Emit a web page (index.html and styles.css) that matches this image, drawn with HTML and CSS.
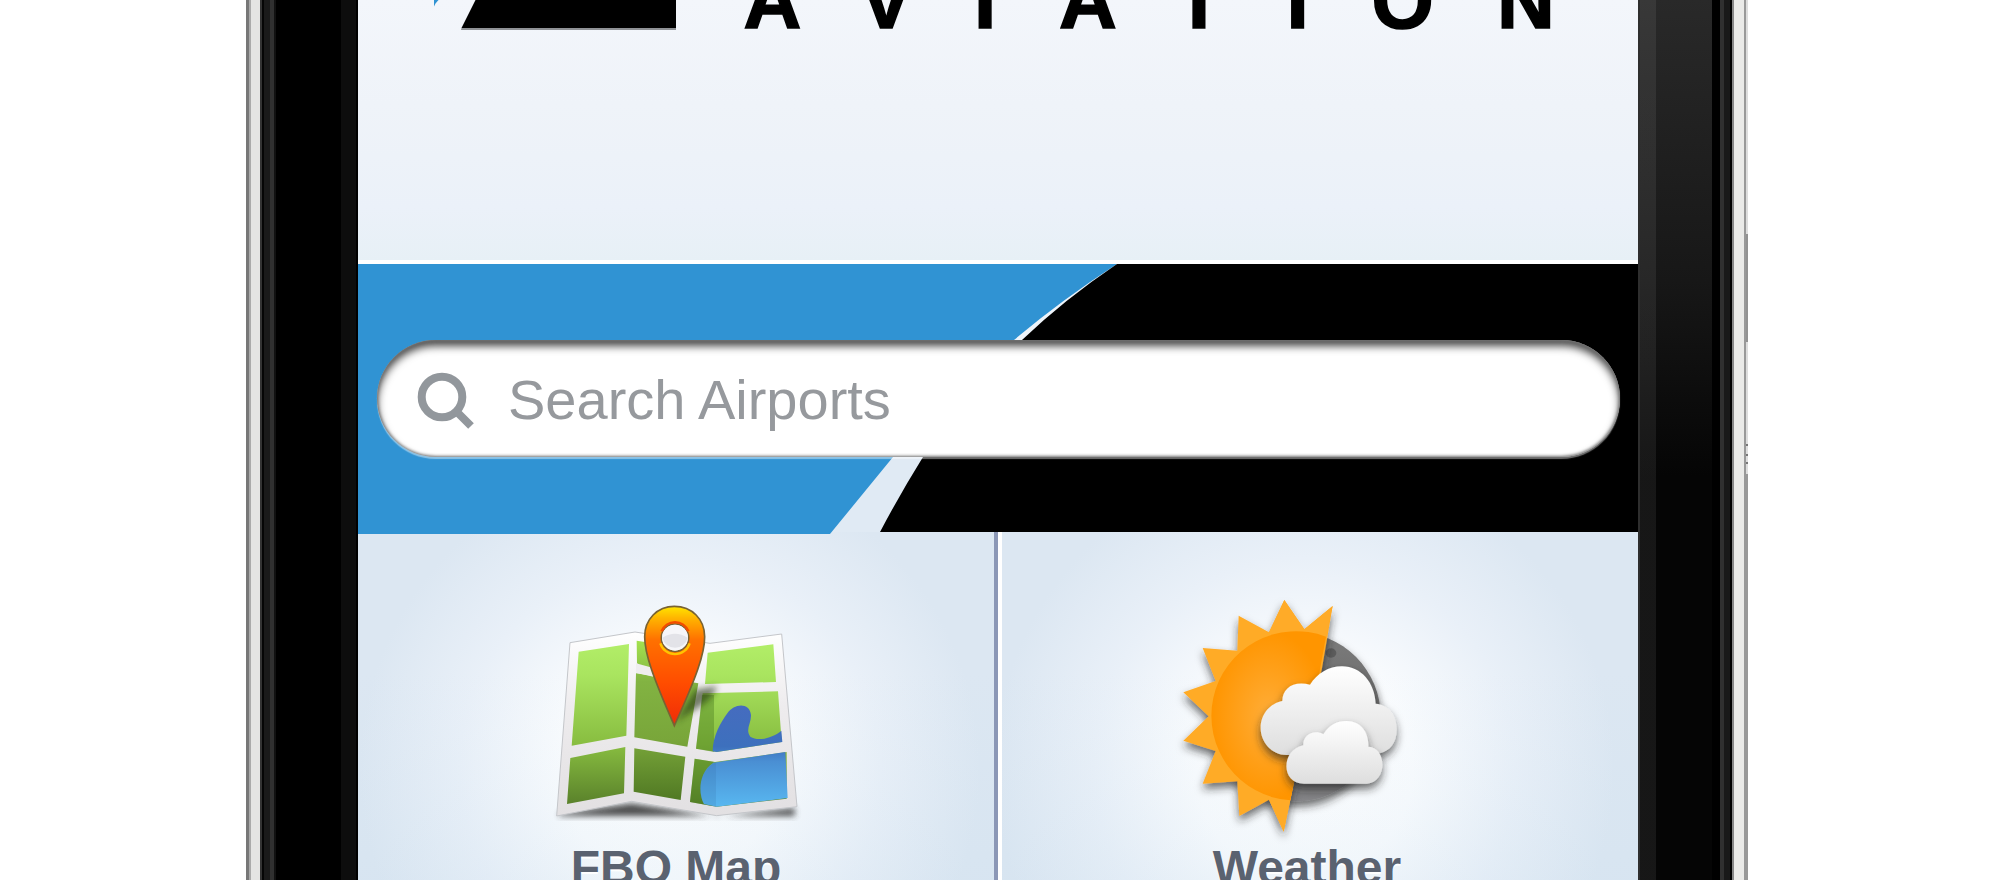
FILE: index.html
```
<!DOCTYPE html>
<html lang="en">
<head>
<meta charset="utf-8">
<title>Aviation</title>
<link rel="stylesheet" href="styles.css">
</head>
<body>
<main class="phone">
  <div class="bezel bezel-left"></div>
  <section class="screen">
    <header class="brand">
      <svg class="logo" width="1280" height="40" viewBox="358 0 1280 40">
        <path d="M434 0h4.500l-3 3.500-1.500 3z" fill="#3093d3"/>
        <path d="M475.500 0H676v28H461.500z" fill="#000"/>
        <path d="M461.500 28H676v2H461z" fill="#8f9296"/>
        <text class="wordmark" y="28" x="743.500 859.500 974 1059 1174.500 1286.500 1371.500 1497">AVIATION</text>
      </svg>
    </header>
    <div class="search-band">
      <svg class="swoosh" width="1280" height="271" viewBox="358 264 1280 271">
        <path d="M1112 266L1060 300L1010 342H1026L1075 300z" fill="#eef4fa"/>
        <path d="M358 264H1117Q1060 301 1014 340Q950 393 893 457L830 534H358z" fill="#3093d3"/>
        <path d="M1117 264H1638V532H880Q900 494 923 457Q966 393 1022 340Q1065 299 1117 264z" fill="#000"/>
      </svg>
      <label class="search">
        <svg class="glass" width="58" height="60" viewBox="0 0 58 60"><circle cx="25" cy="25" r="20.300"/><path d="M39 39L54 54"/></svg>
        <span class="placeholder">Search Airports</span>
      </label>
    </div>
    <nav class="tiles">
      <a class="tile tile-map">
        <svg class="icon icon-map" width="300" height="300" viewBox="0 0 900 900">
          <defs>
            <linearGradient id="paper" x2="0" y2="1"><stop stop-color="#fff"/><stop offset=".4" stop-color="#eeecee"/><stop offset="1" stop-color="#e2e0e2"/></linearGradient>
            <linearGradient id="land" gradientUnits="userSpaceOnUse" x1="0" y1="190" x2="0" y2="680"><stop stop-color="#b2ee68"/><stop offset=".2" stop-color="#a9e45f"/><stop offset=".62" stop-color="#88bd40"/><stop offset="1" stop-color="#587f2a"/></linearGradient>
            <linearGradient id="land2" gradientUnits="userSpaceOnUse" x1="0" y1="180" x2="0" y2="680"><stop stop-color="#a5e34f"/><stop offset=".25" stop-color="#82b342"/><stop offset=".6" stop-color="#79a63a"/><stop offset="1" stop-color="#4c7421"/></linearGradient>
            <linearGradient id="water" gradientUnits="userSpaceOnUse" x1="0" y1="380" x2="0" y2="680"><stop stop-color="#456cbf"/><stop offset=".4" stop-color="#3d70bd"/><stop offset=".55" stop-color="#4a8fd3"/><stop offset="1" stop-color="#58b7f0"/></linearGradient>
            <linearGradient id="pin" x2="0" y2="1"><stop stop-color="#ffe600"/><stop offset=".1" stop-color="#ffb400"/><stop offset=".28" stop-color="#ff7100"/><stop offset=".65" stop-color="#ff4c00"/><stop offset="1" stop-color="#ef2b08"/></linearGradient>
            <filter id="soft" x="-30%" y="-30%" width="160%" height="160%"><feGaussianBlur stdDeviation="9"/></filter>
          </defs>
          <path d="M118 700L335 670L590 710L824 684V708H118z" fill="#333" opacity=".85" filter="url(#soft)"/>
          <path d="M150 188L345 156L570 190L785 162L831 680L590 707L335 664L110 708z" fill="url(#paper)" stroke="#c4c6ca" stroke-width="3"/>
          <path d="M176 215L327 192L319 467L155 497zM151 534L316 501L312 640L141 672z" fill="url(#land)"/>
          <path d="M350 182L400 190V290L351 250zM348 280L535 310L502 500L343 472zM343 505L496 530L482 660L341 635z" fill="url(#land2)"/>
          <path d="M348 250L400 264V290L348 278z" fill="#efedef"/>
          <path d="M563 218L760 193L768 306L555 312zM548 340L774 334L785 486L590 516L528 506zM524 536L585 546L800 516V656L590 680L510 666z" fill="url(#land)"/>
          <path d="M546 345H582V516L528 506zM524 536L580 545V679L510 666z" fill="#4c7e22" opacity=".42"/>
          <path d="M578 514C578 470 603 425 622 400C642 370 689 366 693 405C694 430 675 449 691 470C714 485 756 475 784 452L787 486L590 516zM580 548L796 516L803 654L590 680L552 672C535 642 534 578 580 548z" fill="url(#water)"/>
          <path d="M552 580Q568 554 588 547V680L552 672C538 650 535 606 552 580z" fill="#306c9e" opacity=".18"/>
          <path d="M465 430L525 330L590 318C580 370 510 390 465 430z" fill="#203010" opacity=".6" filter="url(#soft)"/>
          <path d="M463 79C412 79 374 118 374 170C374 220 398 290 463 437C530 290 554 220 554 170C554 118 516 79 463 79zM465 132a41 41 0 1 1 0 82a41 41 0 1 1 0-82z" fill="url(#pin)" fill-rule="evenodd" stroke="#796233" stroke-width="5"/>
          <circle cx="465" cy="173" r="39" fill="#f6f6f9"/>
          <path d="M427 173Q465 150 503 173A39 39 0 0 1 427 173z" fill="#dcdce1" opacity=".7"/>
          <path d="M425 154A43 43 0 0 1 505 154" fill="none" stroke="#f34c00" stroke-width="8"/>
          <path d="M421 190A46 46 0 0 0 509 190" fill="none" stroke="#ffc400" stroke-width="7"/>
        </svg>
        <span class="label">FBO Map</span>
      </a>
      <a class="tile tile-weather">
        <svg class="icon icon-weather" width="300" height="300" viewBox="0 0 900 900">
          <defs>
            <radialGradient id="sun"><stop stop-color="#ffad38"/><stop offset="1" stop-color="#ff9500"/></radialGradient>
            <linearGradient id="cloud" x2="0" y2="1"><stop stop-color="#fff"/><stop offset="1" stop-color="#dedede"/></linearGradient>
            <linearGradient id="moon" x2="0" y2="1"><stop stop-color="#7c7c7c"/><stop offset=".7" stop-color="#606060"/><stop offset="1" stop-color="#858588"/></linearGradient>
            <filter id="drop" x="-20%" y="-20%" width="150%" height="150%"><feDropShadow dx="0" dy="16" stdDeviation="12" flood-color="#222" flood-opacity=".65"/></filter>
          </defs>
          <circle cx="438" cy="410" r="254" fill="url(#moon)" filter="url(#drop)"/>
          <ellipse cx="543" cy="219" rx="16" ry="14" fill="#5c5c5c"/>
          <path d="M548 78L463 148L403 60L357 157L266 107L262 212L158 204L197 303L100 337L176 409L100 482L197 513L158 611L262 604L268 708L357 659L401 755L433 600L515 270z" fill="#ffab28" filter="url(#drop)"/>
          <path d="M548 78L528 168Q515 245 500 330L433 604L401 755L357 659L300 500L357 157L403 60L463 148z" fill="#ffab28"/>
          <path d="M528 170A254 254 0 1 0 421 661L434 598L508 280z" fill="url(#sun)"/>
          <path d="M410 525C365 525 332 486 332 444C332 400 362 370 397 363C397 325 430 301 480 314C503 280 535 259 576 259C634 259 675 310 677 371C715 374 740 405 740 448C740 490 720 512 690 520z" fill="url(#cloud)" filter="url(#drop)"/>
          <path d="M462 611C390 610 394 509 460 496C458 467 490 446 520 463C539 435 558 423 590 423C634 423 657 460 655 500C712 502 712 608 650 611z" fill="url(#cloud)" filter="url(#drop)"/>
        </svg>
        <span class="label">Weather</span>
      </a>
    </nav>
  </section>
  <div class="bezel bezel-right"></div>
  <div class="buttons"></div>
</main>
</body>
</html>
```
FILE: styles.css
```
body { margin: 0; background: #fff; font-family: "Liberation Sans", Arial, sans-serif; }
.phone { display: flex; height: 880px; width: 1504px; margin-left: 246px; overflow: hidden; }
.bezel { height: 880px; flex: none; }
.bezel-left {
  width: 112px;
  background: linear-gradient(90deg, #777 0 3px, #aaa 3px 5px, #e4e4e3 5px 14px, #333 14px 16px, #050505 16px 18px, #1a1a1a 18px 24px, #303030 24px 28px, #111 28px 30px, #000 30px 95px, #0d0d0d 95px 110px, #000 110px);
}
.bezel-right {
  width: 108px;
  background:
    linear-gradient(90deg, #2e2e2e 0 2px, #0000 2px),
    linear-gradient(90deg, #ffffff12 0 18px, #0000 18px 74px, #000 74px 82px, #303030 82px 86px, #191919 86px 92px, #000 92px 94px, #888 94px 96px, #eaeae8 96px 106px, #999 106px 108px),
    linear-gradient(#292929, #171717 32%, #050505 54%, #050505);
}
.buttons {
  width: 2px; height: 880px;
  background: linear-gradient(#ddd 0 234px, #929292 234px 342px, #ddd 342px 444px, #777 444px 446px, #ddd 446px 454px, #777 454px 456px, #ddd 456px 462px, #777 462px 464px, #ddd 464px 474px, #999 474px);
}
.screen { width: 1280px; height: 880px; flex: none; display: flex; flex-direction: column; overflow: hidden; background: #dfe9f3; }
.brand { height: 260px; flex: none; border-bottom: 4px solid #fff; background: linear-gradient(#f3f6fb, #eff3f9 40%, #ebf1f9 80%, #e7f0f6); }
.logo { display: block; }
.wordmark { font: bold 80px "Liberation Sans", Arial, sans-serif; fill: #000; stroke: #000; stroke-width: 1.6px; }
.search-band { position: relative; z-index: 1; box-sizing: border-box; height: 268px; padding: 76px 18px 0 19px; flex: none; background: #e0eaf4; }
.swoosh { position: absolute; left: 0; top: 0; }
.search {
  position: relative; display: flex; align-items: center; box-sizing: border-box; height: 117px; border-radius: 59px; padding: 0 40px; background: #fff;
  box-shadow: inset 0 0 3px 1px #777, inset 0 6px 9px #000b, 0 2px 1px #ffffff70;
}
.glass { flex: none; margin: 6px 0 0 0; fill: none; stroke: #92979c; stroke-width: 8px; }
.placeholder { margin: 3px 0 0 33px; font-size: 56px; line-height: 64px; color: #96999d; white-space: nowrap; }
.tiles { display: grid; grid-template-columns: 640px 640px; height: 348px; flex: none; }
.tile {
  box-sizing: border-box; height: 348px; position: relative; display: flex; flex-direction: column; align-items: center; overflow: hidden;
  background:
    linear-gradient(#fff0 40%, #c4dbec00 40%, #c4dbec30),
    radial-gradient(circle 310px at 49% 237px, #fff 0, #fafcfe 35%, #e9f0f8 68%, #dce7f2 100%);
}
.tile-map { border-right: 4px solid #8b97b6; }
.tile-weather {
  border-left: 4px solid #fff; padding-right: 26px;
  background:
    linear-gradient(#c4dbec00 40%, #c4dbec30),
    radial-gradient(circle 310px at 47.500% 237px, #fff 0, #fafcfe 35%, #e9f0f8 68%, #dce7f2 100%);
}
.icon { display: block; flex: none; margin-top: 48px; }
.icon-map { margin-right: 12px; }
.icon-weather { margin-right: 14px; }
.label { position: absolute; top: 308px; font-weight: bold; font-size: 48px; line-height: 56px; color: #5a6270; text-shadow: 0 2px 1px #fff; }
```
